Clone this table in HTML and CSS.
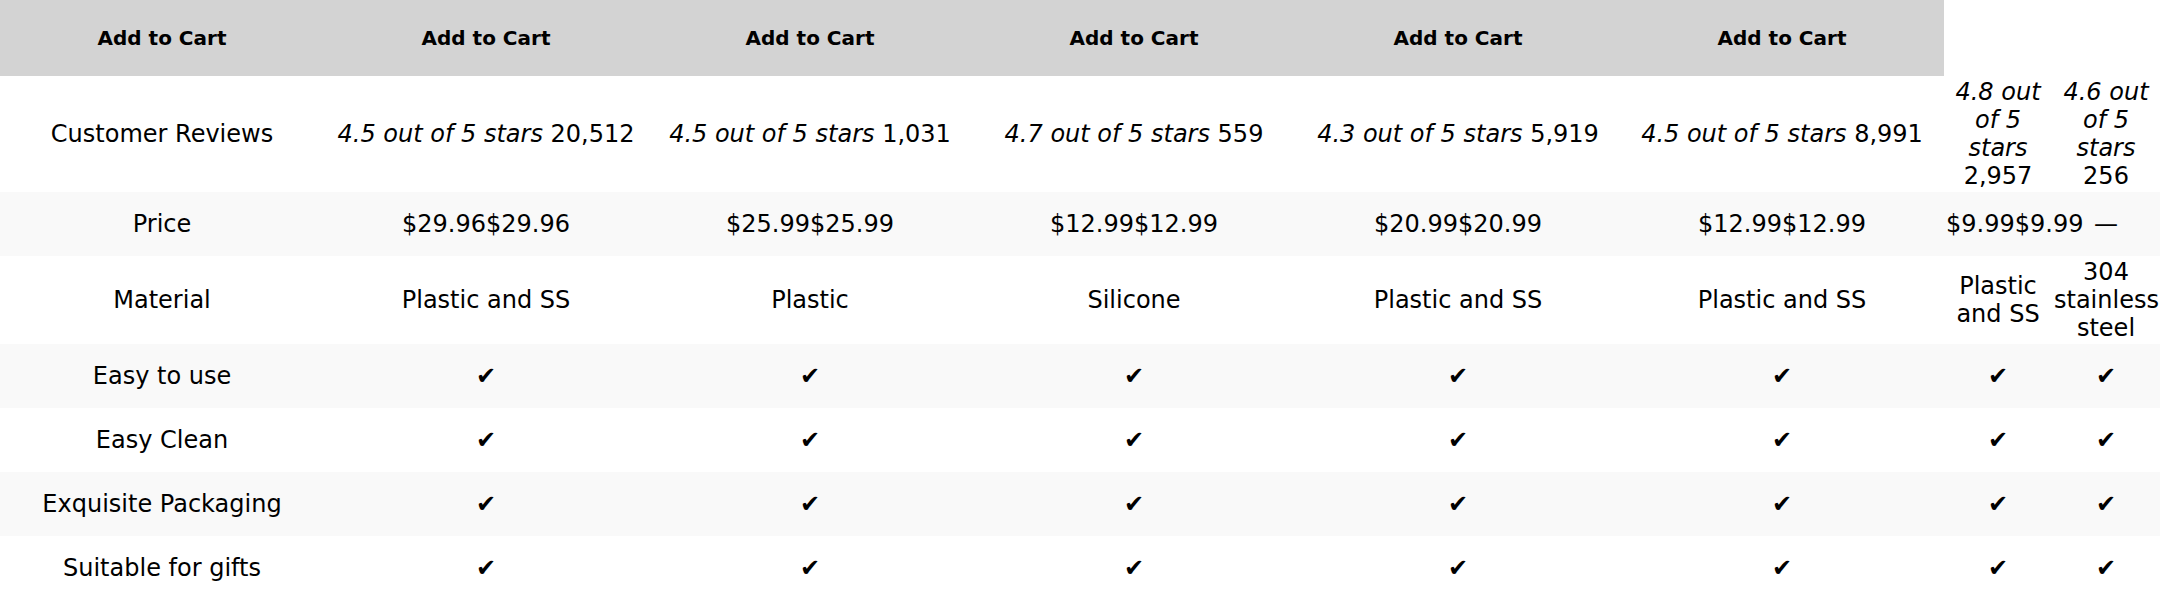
FILE: index.html
```html
<!DOCTYPE html>
<html>
<head>
<meta charset="utf-8">
<link rel="stylesheet" href="styles.css">
</head>
<body>
<table class="compare">
  <colgroup>
    <col class="c-main"><col class="c-main"><col class="c-main"><col class="c-main"><col class="c-main"><col class="c-main"><col><col>
  </colgroup>
  <thead>
    <tr class="head-row">
      <th>Add to Cart</th><th>Add to Cart</th><th>Add to Cart</th><th>Add to Cart</th><th>Add to Cart</th><th>Add to Cart</th>
    </tr>
  </thead>
  <tbody>
    <tr>
      <td>Customer Reviews</td>
      <td><i>4.5 out of 5 stars</i> 20,512</td>
      <td><i>4.5 out of 5 stars</i> 1,031</td>
      <td><i>4.7 out of 5 stars</i> 559</td>
      <td><i>4.3 out of 5 stars</i> 5,919</td>
      <td><i>4.5 out of 5 stars</i> 8,991</td>
      <td><i>4.8 out of 5 stars</i> 2,957</td>
      <td><i>4.6 out of 5 stars</i> 256</td>
    </tr>
    <tr class="alt">
      <td>Price</td>
      <td>$29.96$29.96</td>
      <td>$25.99$25.99</td>
      <td>$12.99$12.99</td>
      <td>$20.99$20.99</td>
      <td>$12.99$12.99</td>
      <td class="nowrap">$9.99$9.99</td>
      <td>—</td>
    </tr>
    <tr>
      <td>Material</td>
      <td>Plastic and SS</td>
      <td>Plastic</td>
      <td>Silicone</td>
      <td>Plastic and SS</td>
      <td>Plastic and SS</td>
      <td>Plastic and SS</td>
      <td>304 stainless steel</td>
    </tr>
    <tr class="alt">
      <td>Easy to use</td>
      <td>✔</td><td>✔</td><td>✔</td><td>✔</td><td>✔</td><td>✔</td><td>✔</td>
    </tr>
    <tr>
      <td>Easy Clean</td>
      <td>✔</td><td>✔</td><td>✔</td><td>✔</td><td>✔</td><td>✔</td><td>✔</td>
    </tr>
    <tr class="alt">
      <td>Exquisite Packaging</td>
      <td>✔</td><td>✔</td><td>✔</td><td>✔</td><td>✔</td><td>✔</td><td>✔</td>
    </tr>
    <tr>
      <td>Suitable for gifts</td>
      <td>✔</td><td>✔</td><td>✔</td><td>✔</td><td>✔</td><td>✔</td><td>✔</td>
    </tr>
  </tbody>
</table>
</body>
</html>
```
FILE: styles.css
```css
html, body {
  margin: 0;
  padding: 0;
  background: #ffffff;
}
body {
  font-family: "DejaVu Sans", sans-serif;
  color: #000000;
}
.compare {
  width: 100%;
  table-layout: fixed;
  border-collapse: collapse;
  border-spacing: 0;
}
.c-main {
  width: 15%;
}
.compare th {
  background: #d3d3d3;
  font-size: 20px;
  font-weight: bold;
  height: 76px;
  padding: 0 2px;
  text-align: center;
  vertical-align: middle;
  box-sizing: border-box;
}
.compare td {
  font-size: 24px;
  line-height: 28px;
  height: 64px;
  padding: 2px;
  text-align: center;
  vertical-align: middle;
  box-sizing: border-box;
}
.compare tr.alt td {
  background: #f9f9f9;
}
.compare td i {
  font-style: italic;
}
.nowrap {
  white-space: nowrap;
}
```
